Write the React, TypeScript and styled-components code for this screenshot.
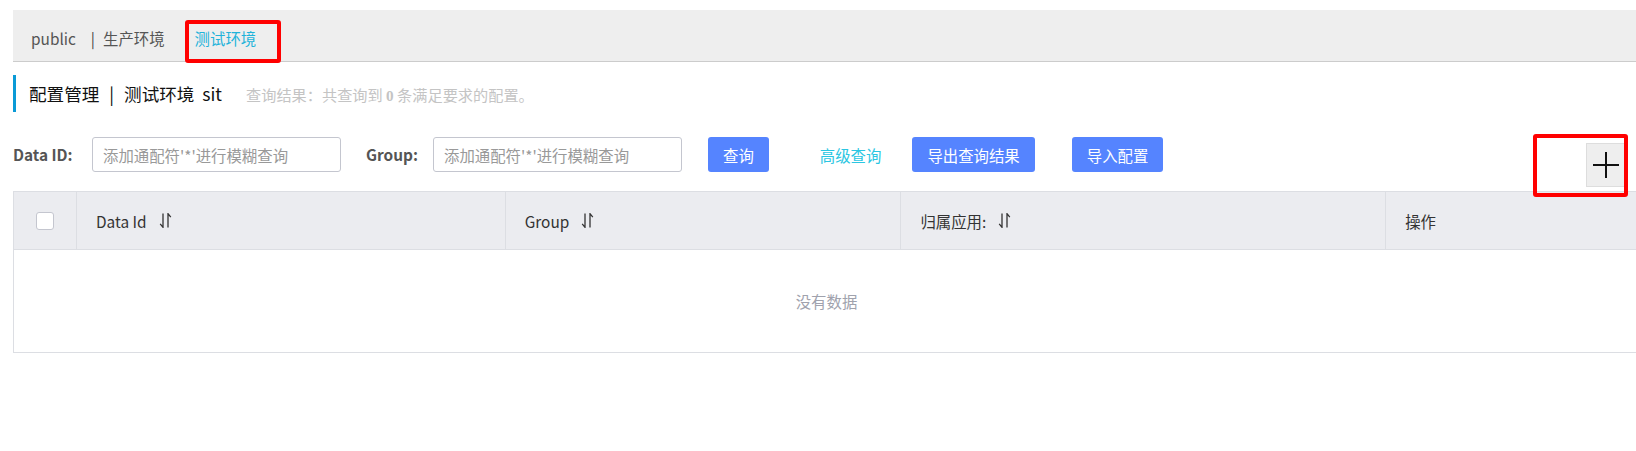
import styled, { createGlobalStyle } from "styled-components";

const GlobalStyle = createGlobalStyle`
  html, body {
    margin: 0;
    padding: 0;
    background: #fff;
    overflow: hidden;
  }
  body {
    font-family: "Noto Sans CJK SC", "Noto Sans", sans-serif;
    color: #333;
  }
`;

const PRIMARY = "#5584ff";
const BORDER = "#dcdee3";

const columns = [
  { name: "Data Id", width: 429, sort: true },
  { name: "Group", width: 396, sort: true },
  { name: "归属应用:", width: 485, sort: true },
  { name: "操作", width: 253, sort: false },
];

const SortIcon = () => (
  <svg width="13" height="15" viewBox="0 0 13 15" fill="none">
    <path
      d="M4 0.5 V14.3 L1.2 10.8 M9 14.5 V0.7 L11.8 4.2"
      stroke="#333"
      strokeWidth="1.3"
    />
  </svg>
);

const PlusIcon = () => (
  <svg width="26" height="26" viewBox="0 0 26 26">
    <path d="M13 0 V26 M0 13 H26" stroke="#111" strokeWidth="2" />
  </svg>
);

const App = () => {
  return (
    <Page>
      <GlobalStyle />
      <TabBar>
        <Tab $mr={15}>public</Tab>
        <Tab $mr={30}>
          <TabSep>|</TabSep>生产环境
        </Tab>
        <Tab $active>
          测试环境
          <Mark style={{ top: 5, bottom: -2, left: -10, right: -25 }} />
        </Tab>
      </TabBar>

      <TitleBar>
        <Title>
          配置管理 <Sep>|</Sep> 测试环境 &nbsp;sit
        </Title>
        <Summary>
          查询结果：共查询到 <b>0</b> 条满足要求的配置。
        </Summary>
      </TitleBar>

      <SearchRow>
        <Label $w={79}>Data ID:</Label>
        <Input placeholder="添加通配符'*'进行模糊查询" />
        <Label $w={67} $ml={25}>
          Group:
        </Label>
        <Input placeholder="添加通配符'*'进行模糊查询" />
        <Button $ml={26}>查询</Button>
        <TextButton $ml={51}>高级查询</TextButton>
        <Button $ml={31}>导出查询结果</Button>
        <Button $ml={37}>导入配置</Button>
        <AddButton>
          <PlusIcon />
          <Mark style={{ top: -10, bottom: -11, left: -54, right: -3 }} />
        </AddButton>
      </SearchRow>

      <Table>
        <HeadRow>
          <CheckCell>
            <CheckBox />
          </CheckCell>
          {columns.map((c) => (
            <HeadCell key={c.name} $w={c.width}>
              {c.name}
              {c.sort && <SortIcon />}
            </HeadCell>
          ))}
        </HeadRow>
        <EmptyBody>没有数据</EmptyBody>
      </Table>
    </Page>
  );
};

export default App;

const Page = styled.div`
  width: 1626px;
  padding: 10px 0 0 13px;
`;

const TabBar = styled.div`
  display: flex;
  align-items: center;
  box-sizing: border-box;
  height: 52px;
  padding: 5px 0 0 18px;
  background: #eee;
  border-bottom: 1px solid #ccc;
  font-size: 15.4px;
`;

const Tab = styled.div<{ $active?: boolean; $mr?: number }>`
  position: relative;
  display: flex;
  align-items: center;
  align-self: stretch;
  margin-right: ${(p) => p.$mr ?? 0}px;
  color: ${(p) => (p.$active ? "#1fb3da" : "#555")};
  cursor: pointer;
`;

const TabSep = styled.span`
  margin-right: 8px;
  color: #444;
`;

const Mark = styled.div`
  position: absolute;
  border: 4px solid #ff0000;
  border-radius: 3px;
  pointer-events: none;
`;

const TitleBar = styled.div`
  display: flex;
  align-items: center;
  height: 37px;
  margin-top: 13px;
  padding-left: 13px;
  border-left: 3px solid #0a9ad6;
`;

const Title = styled.span`
  font-size: 17.6px;
  color: #111;
`;

const Sep = styled.span`
  margin: 0 6px;
`;

const Summary = styled.span`
  margin-left: 24px;
  font-size: 15.2px;
  color: #c4c4c4;

  b {
    font-family: "Liberation Serif", serif;
    font-weight: 700;
  }
`;

const SearchRow = styled.div`
  display: flex;
  align-items: flex-start;
  height: 50px;
  margin-top: 25px;
`;

const Label = styled.label<{ $w: number; $ml?: number }>`
  width: ${(p) => p.$w}px;
  margin-left: ${(p) => p.$ml ?? 0}px;
  line-height: 35px;
  font-size: 15.4px;
  font-weight: 700;
  color: #555;
`;

const Input = styled.input`
  box-sizing: border-box;
  width: 249px;
  height: 35px;
  padding: 0 10px;
  border: 1px solid #c4c6cf;
  border-radius: 3px;
  font-family: inherit;
  font-size: 15.4px;
  color: #333;
  outline: none;
  &::placeholder {
    color: #999;
  }
`;

const Button = styled.button<{ $ml?: number }>`
  height: 35px;
  margin-left: ${(p) => p.$ml ?? 0}px;
  padding: 0 15px;
  border: none;
  border-radius: 3px;
  background: ${PRIMARY};
  color: #fff;
  font-family: inherit;
  font-size: 15.4px;
  cursor: pointer;
`;

const TextButton = styled.button<{ $ml?: number }>`
  height: 35px;
  margin-left: ${(p) => p.$ml ?? 0}px;
  padding: 0;
  border: none;
  background: none;
  color: #2bc6e2;
  font-family: inherit;
  font-size: 15.4px;
  cursor: pointer;
`;

const AddButton = styled.div`
  position: relative;
  display: flex;
  align-items: center;
  justify-content: center;
  box-sizing: border-box;
  align-self: flex-end;
  width: 40px;
  height: 44px;
  margin-left: auto;
  margin-right: 13px;
  background: #eee;
  border: 1px solid #ddd;
  cursor: pointer;
`;

const Table = styled.div`
  margin-top: 4px;
  border: 1px solid ${BORDER};
  border-right: none;
`;

const HeadRow = styled.div`
  display: flex;
  height: 57px;
  background: #ebecf0;
  border-bottom: 1px solid ${BORDER};
`;

const CheckCell = styled.div`
  display: flex;
  align-items: center;
  justify-content: center;
  width: 62px;
  border-right: 1px solid ${BORDER};
`;

const CheckBox = styled.span`
  box-sizing: border-box;
  width: 18px;
  height: 18px;
  background: #fff;
  border: 1px solid #c4c6cf;
  border-radius: 3px;
`;

const HeadCell = styled.div<{ $w: number }>`
  box-sizing: border-box;
  display: flex;
  align-items: center;
  gap: 12px;
  width: ${(p) => p.$w}px;
  padding: 0 19px;
  font-size: 15.4px;
  color: #333;
  border-right: 1px solid ${BORDER};
  &:last-child {
    border-right: none;
  }
`;

const EmptyBody = styled.div`
  display: flex;
  align-items: center;
  justify-content: center;
  height: 102px;
  font-size: 15.4px;
  color: #a0a2ad;
`;
